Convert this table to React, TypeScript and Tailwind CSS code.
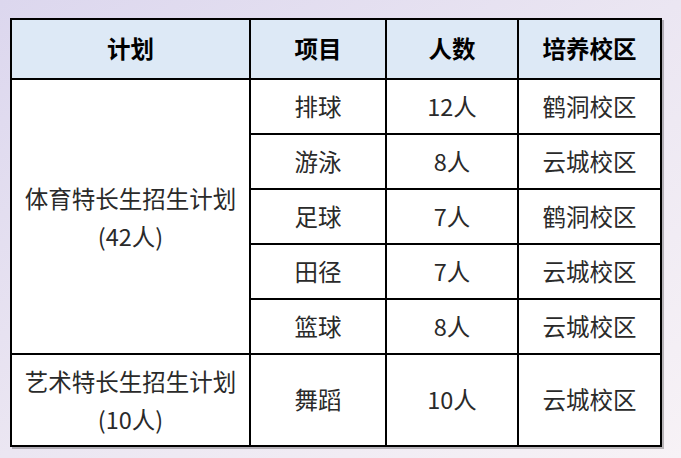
const rows = [
  { item: "排球", count: "12人", campus: "鹤洞校区" },
  { item: "游泳", count: "8人", campus: "云城校区" },
  { item: "足球", count: "7人", campus: "鹤洞校区" },
  { item: "田径", count: "7人", campus: "云城校区" },
  { item: "篮球", count: "8人", campus: "云城校区" },
];

const cell = "border-2 border-black text-center align-middle";

export default function App() {
  return (
    <div className="w-[681px] h-[458px] overflow-hidden bg-gradient-to-br from-[#dcd7ee] via-[#ebe6f2] to-[#f7f2f6] pl-[10px] pt-[18px] font-['Noto_Sans_CJK_SC','Noto_Sans',sans-serif]">
      <table className="table-fixed border-collapse w-[650px] bg-white text-[23.5px] text-[#2a2a2a] shadow-[2px_2px_0_rgba(0,0,0,0.25)]">
        <colgroup>
          <col className="w-[239px]" />
          <col className="w-[136px]" />
          <col className="w-[132px]" />
          <col className="w-[143px]" />
        </colgroup>
        <thead>
          <tr className="h-[60px] bg-[#dde9f6] text-black">
            <th className={`${cell} font-bold`}>计划</th>
            <th className={`${cell} font-bold`}>项目</th>
            <th className={`${cell} font-bold`}>人数</th>
            <th className={`${cell} font-bold`}>培养校区</th>
          </tr>
        </thead>
        <tbody>
          {rows.map((r, i) => (
            <tr key={r.item} className="h-[55px]">
              {i === 0 && (
                <td rowSpan={5} className={`${cell} leading-[38px]`}>
                  体育特长生招生计划
                  <br />
                  (42人)
                </td>
              )}
              <td className={cell}>{r.item}</td>
              <td className={cell}>{r.count}</td>
              <td className={cell}>{r.campus}</td>
            </tr>
          ))}
          <tr className="h-[92px]">
            <td className={`${cell} leading-[38px]`}>
              艺术特长生招生计划
              <br />
              (10人)
            </td>
            <td className={cell}>舞蹈</td>
            <td className={cell}>10人</td>
            <td className={cell}>云城校区</td>
          </tr>
        </tbody>
      </table>
    </div>
  );
}
